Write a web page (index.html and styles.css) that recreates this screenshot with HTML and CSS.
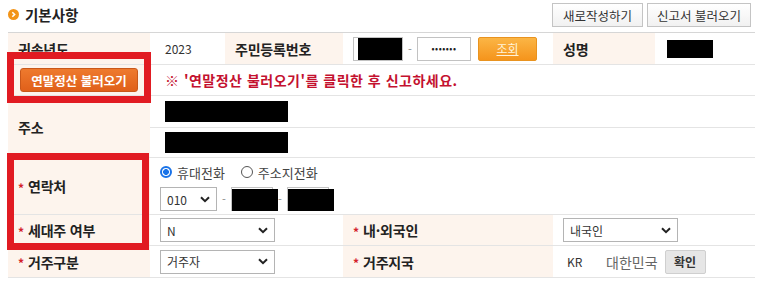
FILE: index.html
```html
<!DOCTYPE html>
<html lang="ko">
<head>
<meta charset="utf-8">
<title>기본사항</title>
<link rel="stylesheet" href="styles.css">
</head>
<body>
<div class="page">
  <div class="head">
    <div class="title">
      <svg class="bullet" width="11" height="11" viewBox="0 0 11 11"><circle cx="5.5" cy="5.5" r="5.5" fill="#f29418"/><path d="M4.3 3.2 L6.6 5.5 L4.3 7.8" fill="none" stroke="#fff" stroke-width="1.6"/></svg>
      <span>기본사항</span>
    </div>
    <div class="topbtns">
      <button class="btn w1">새로작성하기</button>
      <button class="btn w2">신고서 불러오기</button>
    </div>
  </div>

  <div class="grid">
    <!-- row 1 -->
    <div class="th">귀속년도</div>
    <div class="td year">2023</div>
    <div class="th">주민등록번호</div>
    <div class="td">
      <span class="inp"><span class="mask"></span></span>
      <span class="dash">-</span>
      <span class="inp inp2">•••••••</span>
      <span class="btn-lookup">조회</span>
    </div>
    <div class="th">성명</div>
    <div class="td"><span class="namebox"></span></div>

    <!-- row 2 -->
    <div class="th"><span class="btn-import">연말정산 불러오기</span></div>
    <div class="td span5 notice">※ '연말정산 불러오기'를 클릭한 후 신고하세요.</div>

    <!-- row 3 / 4 -->
    <div class="th addr-th">주소</div>
    <div class="td span5"><span class="addr"></span></div>
    <div class="td span5"><span class="addr"></span></div>

    <!-- row 5 -->
    <div class="th"><span class="req">*</span>연락처</div>
    <div class="td span5 contact">
      <div class="radios">
        <label class="rd"><span class="radio on"></span>휴대전화</label>
        <label class="rd"><span class="radio"></span>주소지전화</label>
      </div>
      <div class="line">
        <span class="sel s-phone"><span>010</span><svg width="10" height="7" viewBox="0 0 10 7"><path d="M1 1.2 L5 5.2 L9 1.2" fill="none" stroke="#222" stroke-width="2"/></svg></span>
        <span class="dash">-</span>
        <span class="pin"><span class="pmask"></span></span>
        <span class="dash">-</span>
        <span class="pin"><span class="pmask"></span></span>
      </div>
    </div>

    <!-- row 6 -->
    <div class="th"><span class="req">*</span>세대주 여부</div>
    <div class="td span2"><span class="sel s-wide"><span>N</span><svg width="10" height="7" viewBox="0 0 10 7"><path d="M1 1.2 L5 5.2 L9 1.2" fill="none" stroke="#222" stroke-width="2"/></svg></span></div>
    <div class="th"><span class="req">*</span>내·외국인</div>
    <div class="td span2"><span class="sel s-wide"><span>내국인</span><svg width="10" height="7" viewBox="0 0 10 7"><path d="M1 1.2 L5 5.2 L9 1.2" fill="none" stroke="#222" stroke-width="2"/></svg></span></div>

    <!-- row 7 -->
    <div class="th"><span class="req">*</span>거주구분</div>
    <div class="td span2"><span class="sel s-wide"><span>거주자</span><svg width="10" height="7" viewBox="0 0 10 7"><path d="M1 1.2 L5 5.2 L9 1.2" fill="none" stroke="#222" stroke-width="2"/></svg></span></div>
    <div class="th"><span class="req">*</span>거주지국</div>
    <div class="td span2">
      <span class="kr">KR</span>
      <span class="country">대한민국</span>
      <span class="btn-ok">확인</span>
    </div>
  </div>

  <div class="mark m1"></div>
  <div class="mark m2"></div>
</div>
</body>
</html>
```

FILE: styles.css
```css
html, body {
  margin: 0;
  padding: 0;
  background: #fff;
}
body {
  font-family: "Noto Sans CJK KR", "Noto Sans", sans-serif;
  color: #333;
}
.page {
  position: relative;
  padding: 0 8px;
  width: 747px;
}
.head {
  display: flex;
  align-items: center;
  justify-content: space-between;
  height: 32px;
}
.title {
  display: flex;
  align-items: center;
  gap: 6px;
  font-size: 14.5px;
  font-weight: bold;
  color: #222;
  margin-top: -3px;
}
.bullet {
  display: block;
}
.topbtns {
  display: flex;
  gap: 4px;
  margin-right: 4px;
  margin-top: -2px;
}
.btn {
  height: 24px;
  padding: 0;
  border: 1px solid #c4c4c4;
  background: linear-gradient(#ffffff, #f1f1f1);
  font-family: inherit;
  font-size: 12.5px;
  color: #333;
  text-align: center;
}
.w1 { width: 91px; }
.w2 { width: 104px; }

.grid {
  display: grid;
  grid-template-columns: 142px 75px 118px 210px 102px 100px;
  grid-template-rows: 32px 31px 32px 30px 57px 31px 32px;
  border-top: 1px solid #d6d6d6;
}
.th, .td {
  box-sizing: border-box;
  display: flex;
  align-items: center;
  border-bottom: 1px solid #e4e4e4;
  padding: 0 10px;
  white-space: nowrap;
}
.th {
  background: #fdf4ed;
  font-weight: bold;
  font-size: 14px;
  letter-spacing: -0.2px;
  color: #222;
}
.td {
  font-size: 12px;
  color: #333;
}
.span5 { grid-column: span 5; }
.span2 { grid-column: span 2; }
.addr-th { grid-row: span 2; }

.td.year {
  padding-left: 15px;
}
.line {
  display: flex;
  align-items: center;
}
.inp {
  display: flex;
  align-items: center;
  justify-content: center;
  box-sizing: border-box;
  width: 50px;
  height: 24px;
  border: 1px solid #c2c2c2;
  background: #fff;
  padding-left: 4px;
}
.mask {
  display: block;
  width: 45px;
  height: 22px;
  background: #000;
}
.inp2 {
  width: 54px;
  padding-left: 0;
  font-size: 9px;
  letter-spacing: 0.5px;
  color: #222;
}
.dash {
  width: 14px;
  text-align: center;
  color: #888;
  font-size: 11px;
}
.btn-lookup {
  display: flex;
  align-items: center;
  justify-content: center;
  box-sizing: border-box;
  width: 59px;
  height: 24px;
  margin-left: 7px;
  background: linear-gradient(#fbb545, #f5941c);
  border: 1px solid #e9931f;
  border-radius: 2px;
  color: #fff3d9;
  font-size: 12px;
  text-decoration: underline;
}
.namebox {
  display: block;
  width: 46px;
  height: 18px;
  margin-left: 2px;
  background: #000;
}

.btn-import {
  display: flex;
  align-items: center;
  justify-content: center;
  box-sizing: border-box;
  width: 118px;
  height: 24px;
  margin-left: 2px;
  background: linear-gradient(#ee7a2e, #e0601a);
  border: 1px solid #c9581a;
  border-radius: 3px;
  color: #fff;
  font-size: 12.5px;
  font-weight: bold;
  letter-spacing: 0;
}
.td.notice {
  padding-left: 15px;
  color: #c4112f;
  font-size: 14px;
  font-weight: bold;
  letter-spacing: 0.5px;
}
.addr {
  display: block;
  width: 123px;
  height: 21px;
  margin-left: 5px;
  background: #000;
}

.req {
  display: inline-block;
  width: 10px;
  color: #d4202a;
  font-size: 12px;
  align-self: center;
  margin-top: 2px;
}
.td.contact {
  flex-direction: column;
  align-items: flex-start;
  justify-content: flex-start;
  padding-top: 4px;
}
.radios {
  display: flex;
  align-items: center;
  height: 20px;
  margin-bottom: 5px;
  gap: 16px;
  font-size: 13px;
  color: #444;
}
.rd {
  display: flex;
  align-items: center;
  gap: 5px;
}
.radio {
  display: block;
  box-sizing: border-box;
  width: 12px;
  height: 12px;
  border: 1px solid #555;
  border-radius: 50%;
  background: #fff;
}
.radio.on {
  border: 2px solid #1a73e8;
  background: radial-gradient(circle, #1a73e8 0 2.6px, #fff 3.2px);
}
.sel {
  display: flex;
  align-items: center;
  justify-content: space-between;
  box-sizing: border-box;
  height: 24px;
  padding: 0 6px 0 6px;
  border: 1px solid #b4b4b4;
  background: #fff;
  font-size: 12px;
  color: #333;
}
.s-phone { width: 57px; }
.s-wide { width: 115px; }
.pin {
  display: block;
  box-sizing: border-box;
  width: 42px;
  height: 24px;
  border: 1px solid #c2c2c2;
  background: #fff;
  padding-top: 1px;
}
.pmask {
  display: block;
  width: 46px;
  height: 22px;
  background: #000;
}
.kr {
  margin-left: 4px;
  width: 39px;
  font-size: 12px;
}
.country {
  font-size: 14px;
  color: #666;
}
.btn-ok {
  display: flex;
  align-items: center;
  justify-content: center;
  box-sizing: border-box;
  width: 41px;
  height: 24px;
  margin-left: 7px;
  background: #e6e6e6;
  border: 1px solid #cfcfcf;
  border-radius: 2px;
  font-size: 12px;
  font-weight: bold;
  color: #333;
}

.mark {
  position: absolute;
  box-sizing: border-box;
  border: 7px solid #e11b22;
}
.m1 {
  left: 7px;
  top: 52px;
  width: 144px;
  height: 51px;
}
.m2 {
  left: 7px;
  top: 153px;
  width: 142px;
  height: 97px;
}
```
